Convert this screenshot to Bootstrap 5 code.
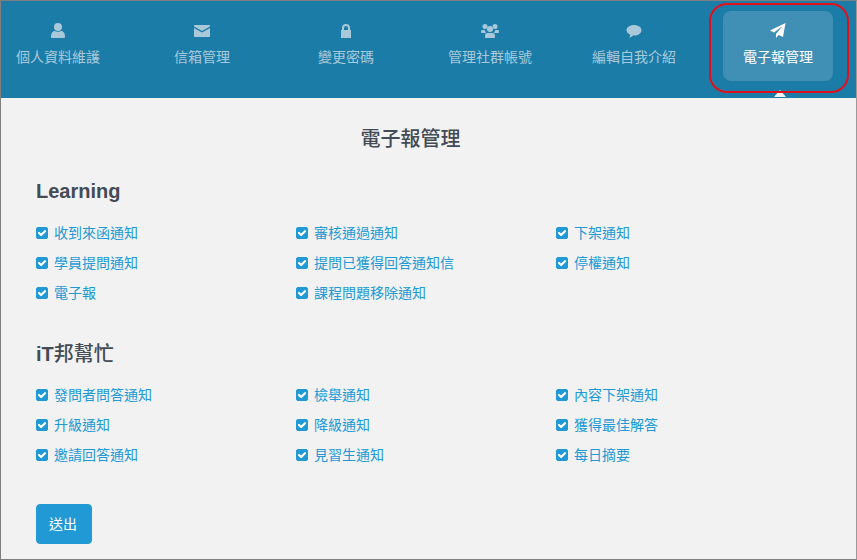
<!DOCTYPE html>
<html lang="zh-Hant"><head><meta charset="utf-8">
<link href="https://cdn.jsdelivr.net/npm/bootstrap@5.3.0/dist/css/bootstrap.min.css" rel="stylesheet">
<style>
html,body{height:560px;overflow:hidden;background:#f2f2f2}
body{font-family:"Liberation Sans","Noto Sans CJK TC",sans-serif;color:#444b55}
.frame{position:relative;height:560px;border:1px solid #7f7f7f;border-right-color:#9a9a9a;overflow:hidden;background:#f2f2f2}
.topbar{height:97px;background:#1c7ca8;padding:10px 0 0 2px;gap:34px}
.tab{position:relative;width:110px;height:70px;border-radius:8px;color:#a9c9da;text-decoration:none;font-size:14px;line-height:20px;padding-top:11px}
.tab svg{display:block;margin:0 auto 7px;height:18px;width:18px;fill:#a9c9da}
.tab.on{background:#408fb5;color:#fff}
.tab.on svg{fill:#fff}
.tab.on::after{content:"";position:absolute;left:50%;margin-left:-4px;top:79px;border:6px solid transparent;border-top:0;border-bottom:7px solid #f2f2f2}
.redmark{position:absolute;left:708px;top:2px;width:140px;height:90px;border:2px solid #e3101c;border-radius:18px}
.sheet{padding:0 35px}
.pagetitle{font-size:20px;line-height:24px;font-weight:500;text-align:center;margin:29px 36px 0 0;color:#444b55}
.grouptitle{font-size:20px;line-height:24px;font-weight:700;margin:0;color:#444b55}
.grouptitle span{font-weight:500}
.first{margin-top:28px}
.second{margin-top:34px}
.optgrid{display:grid;grid-template-columns:repeat(3,260px);grid-auto-rows:30px;margin-top:15px}
.second + .optgrid{margin-top:14px}
.optgrid .form-check{margin:0;padding:0;min-height:0;display:flex;align-items:center;height:30px}
.optgrid .form-check-input{width:12px;height:12px;margin:0 6px 0 0;float:none;border-radius:2px;background-color:#2199d4;border-color:#2199d4;background-size:12px;background-image:url("data:image/svg+xml,%3csvg xmlns='http://www.w3.org/2000/svg' viewBox='0 0 20 20'%3e%3cpath fill='none' stroke='%23fff' stroke-linecap='round' stroke-linejoin='round' stroke-width='3.6' d='m5 10 3.500 3.500L15 7'/%3e%3c/svg%3e")}
.optgrid .form-check-label{font-size:14px;line-height:20px;color:#2199d4;opacity:1}
.sendbtn{margin-top:34px;width:56px;height:40px;background:#2199d4;border-color:#2199d4;color:#fff;font-size:14px;border-radius:4px;padding:0 2px 0 0}
</style></head><body>
<div class="frame">
<nav class="topbar d-flex">
<a class="tab text-center" href="#"><svg viewBox="0 0 18 18"><circle cx="9" cy="5" r="4"/><path d="M3 16c-.8 0-1-.6-1-1.500 0-3.500 1.700-5.500 4-5.500 1 1 5 1 6 0 2.300 0 4 2 4 5.500 0 .9-.3 1.500-1 1.500z"/></svg>個人資料維護</a>
<a class="tab text-center" href="#"><svg viewBox="0 0 18 18"><path d="M2 3h14c.6 0 1 .4 1 1v.5L9 9 1 4.500V4c0-.6.400-1 1-1z"/><path d="M1 6l8 4.500L17 6v8c0 .6-.4 1-1 1H2c-.6 0-1-.4-1-1z"/></svg>信箱管理</a>
<a class="tab text-center" href="#"><svg viewBox="0 0 18 18"><path d="M5 8V6a4 4 0 0 1 8 0v2h1v8H4V8zm2 0h4V6a2 2 0 0 0-4 0z"/></svg>變更密碼</a>
<a class="tab text-center" href="#"><svg viewBox="0 0 18 18"><circle cx="4" cy="4.500" r="2.500"/><circle cx="14" cy="4.500" r="2.500"/><circle cx="9" cy="7" r="3"/><path d="M1 8h2.500c.8 1 1 2 1.500 3H1c-.5 0-1-.4-1-1 0-1 .3-2 1-2zM17 8h-2.500c-.8 1-1 2-1.500 3h4c.5 0 1-.4 1-1 0-1-.3-2-1-2zM6 11h6c1 0 2 1 2 3v1c0 .6-.4 1-1 1H5c-.6 0-1-.4-1-1v-1c0-2 1-3 2-3z"/></svg>管理社群帳號</a>
<a class="tab text-center" href="#"><svg viewBox="0 0 18 18"><path d="M9 3c4.200 0 7.500 2.300 7.500 5.300s-3.300 5.300-7.500 5.300h-1.200C6.800 15 5.500 15.500 4 15.500c.7-.8 1.200-1.700 1.200-2.800C3 11.800 1.500 10.200 1.500 8.300 1.500 5.300 4.800 3 9 3z"/></svg>編輯自我介紹</a>
<a class="tab on text-center" href="#"><svg viewBox="0 0 18 18"><path d="M16.500 1 14 15l-4.500-2-2.500 3v-4l6.500-8-8.500 6.500-4-2z"/></svg>電子報管理</a>
</nav>
<div class="redmark"></div>
<main class="sheet">
<h1 class="pagetitle">電子報管理</h1>
<h2 class="grouptitle first">Learning</h2>
<div class="optgrid">
<div class="form-check"><input class="form-check-input" type="checkbox" id="a1" checked><label class="form-check-label" for="a1">收到來函通知</label></div>
<div class="form-check"><input class="form-check-input" type="checkbox" id="a2" checked><label class="form-check-label" for="a2">審核通過通知</label></div>
<div class="form-check"><input class="form-check-input" type="checkbox" id="a3" checked><label class="form-check-label" for="a3">下架通知</label></div>
<div class="form-check"><input class="form-check-input" type="checkbox" id="a4" checked><label class="form-check-label" for="a4">學員提問通知</label></div>
<div class="form-check"><input class="form-check-input" type="checkbox" id="a5" checked><label class="form-check-label" for="a5">提問已獲得回答通知信</label></div>
<div class="form-check"><input class="form-check-input" type="checkbox" id="a6" checked><label class="form-check-label" for="a6">停權通知</label></div>
<div class="form-check"><input class="form-check-input" type="checkbox" id="a7" checked><label class="form-check-label" for="a7">電子報</label></div>
<div class="form-check"><input class="form-check-input" type="checkbox" id="a8" checked><label class="form-check-label" for="a8">課程問題移除通知</label></div>
</div>
<h2 class="grouptitle second">iT<span>邦幫忙</span></h2>
<div class="optgrid">
<div class="form-check"><input class="form-check-input" type="checkbox" id="b1" checked><label class="form-check-label" for="b1">發問者問答通知</label></div>
<div class="form-check"><input class="form-check-input" type="checkbox" id="b2" checked><label class="form-check-label" for="b2">檢舉通知</label></div>
<div class="form-check"><input class="form-check-input" type="checkbox" id="b3" checked><label class="form-check-label" for="b3">內容下架通知</label></div>
<div class="form-check"><input class="form-check-input" type="checkbox" id="b4" checked><label class="form-check-label" for="b4">升級通知</label></div>
<div class="form-check"><input class="form-check-input" type="checkbox" id="b5" checked><label class="form-check-label" for="b5">降級通知</label></div>
<div class="form-check"><input class="form-check-input" type="checkbox" id="b6" checked><label class="form-check-label" for="b6">獲得最佳解答</label></div>
<div class="form-check"><input class="form-check-input" type="checkbox" id="b7" checked><label class="form-check-label" for="b7">邀請回答通知</label></div>
<div class="form-check"><input class="form-check-input" type="checkbox" id="b8" checked><label class="form-check-label" for="b8">見習生通知</label></div>
<div class="form-check"><input class="form-check-input" type="checkbox" id="b9" checked><label class="form-check-label" for="b9">每日摘要</label></div>
</div>
<button type="button" class="btn sendbtn">送出</button>
</main>
</div>
<script src="https://cdn.jsdelivr.net/npm/bootstrap@5.3.0/dist/js/bootstrap.bundle.min.js"></script>
</body></html>
